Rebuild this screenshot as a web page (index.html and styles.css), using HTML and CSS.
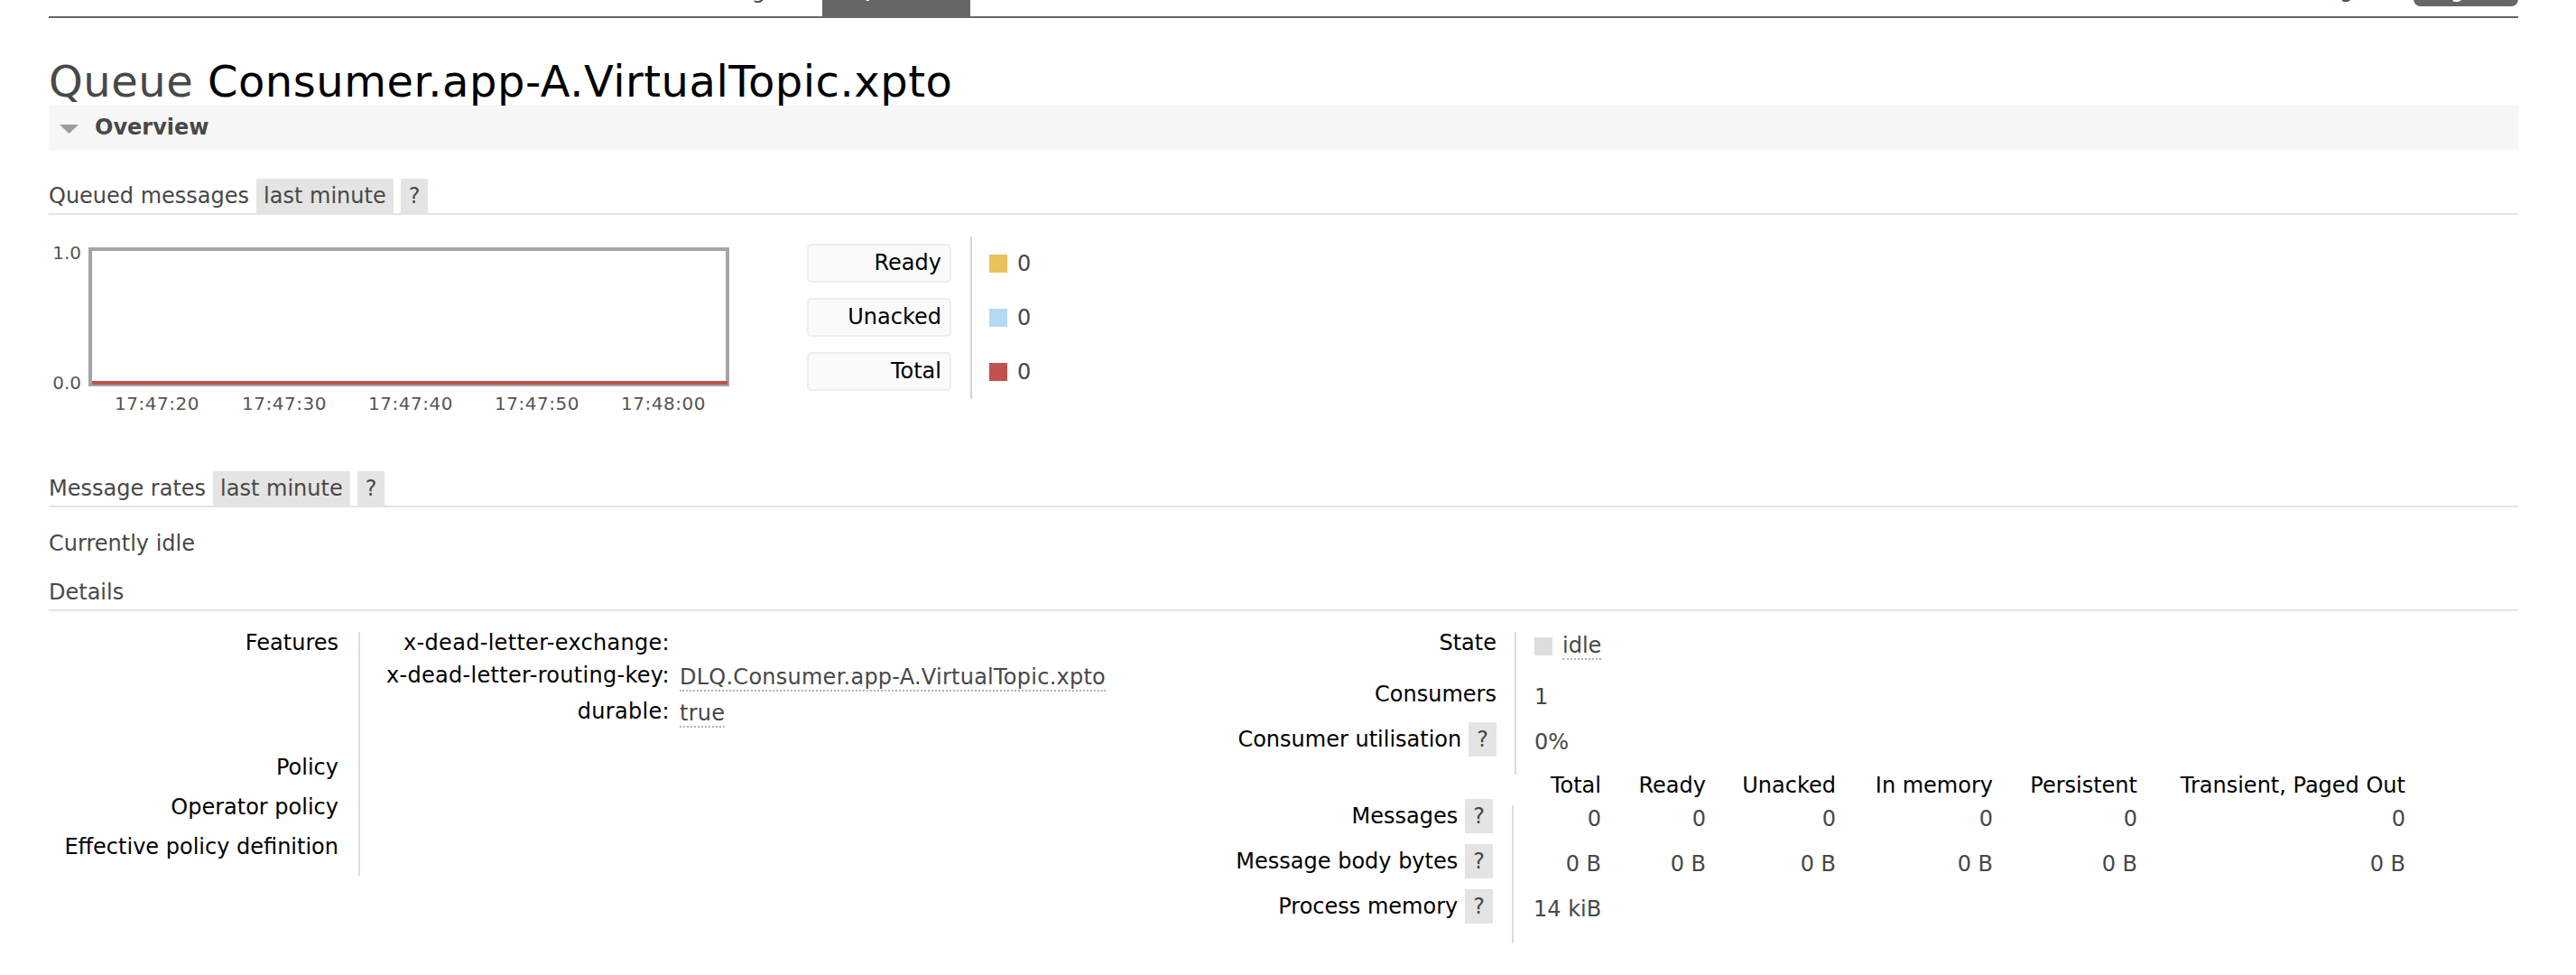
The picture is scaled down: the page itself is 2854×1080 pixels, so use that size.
FILE: index.html
```html
<!DOCTYPE html>
<html lang="en">
<head>
<meta charset="utf-8">
<title>RabbitMQ Management: Queue Consumer.app-A.VirtualTopic.xpto</title>
<link rel="stylesheet" href="styles.css">
</head>
<body>
<header class="header">
  <ul class="tabs">
    <li class="tab">Overview</li>
    <li class="tab">Connections</li>
    <li class="tab">Channels</li>
    <li class="tab">Exchanges</li>
    <li class="tab tab-active">Queues</li>
    <li class="tab">Admin</li>
  </ul>
  <div class="login">
    <span class="user">User guest</span>
    <span class="logout">Log out</span>
  </div>
</header>
<main class="main">
  <h1 class="title">Queue <b class="title-name">Consumer.app-A.VirtualTopic.xpto</b></h1>
  <section class="section">
    <h2 class="section-title"><svg class="tri" width="21" height="10" viewBox="0 0 21 10"><polygon points="0,0 21,0 10.5,10" fill="#9c9c9c"/></svg><span>Overview</span></h2>
    <div class="section-body">
      <h3 class="h3 h3-first"><span class="h3-text">Queued messages</span><span class="pill">last minute</span><span class="pill pill-q">?</span></h3>
      <div class="chart-row">
        <svg class="chart" width="770" height="200" viewBox="0 0 770 200">
          <rect x="46" y="14" width="706" height="150" fill="#fff" stroke="#a5a5a5" stroke-width="4"/>
          <rect x="48" y="160" width="704" height="4" fill="#c0514f"/>
          <text class="yl" x="36" y="25" text-anchor="end">1.0</text>
          <text class="yl" x="36" y="169" text-anchor="end">0.0</text>
          <text class="xl" x="120" y="192" text-anchor="middle">17:47:20</text>
          <text class="xl" x="261" y="192" text-anchor="middle">17:47:30</text>
          <text class="xl" x="401" y="192" text-anchor="middle">17:47:40</text>
          <text class="xl" x="541" y="192" text-anchor="middle">17:47:50</text>
          <text class="xl" x="681" y="192" text-anchor="middle">17:48:00</text>
        </svg>
        <div class="legend">
          <div class="legend-labels">
            <div class="lbox">Ready</div>
            <div class="lbox">Unacked</div>
            <div class="lbox">Total</div>
          </div>
          <div class="legend-values">
            <div class="lval"><i class="sw sw-ready"></i><span>0</span></div>
            <div class="lval"><i class="sw sw-unacked"></i><span>0</span></div>
            <div class="lval"><i class="sw sw-total"></i><span>0</span></div>
          </div>
        </div>
      </div>

      <h3 class="h3 h3-rates"><span class="h3-text">Message rates</span><span class="pill">last minute</span><span class="pill pill-q">?</span></h3>
      <p class="idle-msg">Currently idle</p>

      <h3 class="h3 h3-details"><span class="h3-text">Details</span></h3>
      <div class="details">
        <div class="facts-l">
          <div class="fl-label">Features</div>
          <div class="fl-value fl-features">
            <div class="features">
              <div class="fk">x-dead-letter-exchange:</div><div class="fv"></div>
              <div class="fk">x-dead-letter-routing-key:</div><div class="fv"><span class="abbr">DLQ.Consumer.app-A.VirtualTopic.xpto</span></div>
              <div class="fk">durable:</div><div class="fv"><span class="abbr">true</span></div>
            </div>
          </div>
          <div class="fl-label">Policy</div><div class="fl-value"></div>
          <div class="fl-label">Operator policy</div><div class="fl-value"></div>
          <div class="fl-label">Effective policy definition</div><div class="fl-value"></div>
        </div>

        <div class="facts-r">
          <div class="fr-top">
            <div class="fr-label">State</div>
            <div class="fr-value"><span class="state-dot"></span><span class="abbr">idle</span></div>
            <div class="fr-label">Consumers</div>
            <div class="fr-value">1</div>
            <div class="fr-label">Consumer utilisation<span class="pill pill-q pill-inline">?</span></div>
            <div class="fr-value">0%</div>
          </div>
          <div class="fr-bottom">
            <div></div>
            <div class="th">Total</div>
            <div class="th">Ready</div>
            <div class="th">Unacked</div>
            <div class="th">In memory</div>
            <div class="th">Persistent</div>
            <div class="th">Transient, Paged Out</div>

            <div class="fr-label fr-label-b">Messages<span class="pill pill-q pill-inline">?</span></div>
            <div class="num num-first">0</div>
            <div class="num">0</div>
            <div class="num">0</div>
            <div class="num">0</div>
            <div class="num">0</div>
            <div class="num">0</div>

            <div class="fr-label fr-label-b">Message body bytes<span class="pill pill-q pill-inline">?</span></div>
            <div class="num num-first">0 B</div>
            <div class="num">0 B</div>
            <div class="num">0 B</div>
            <div class="num">0 B</div>
            <div class="num">0 B</div>
            <div class="num">0 B</div>

            <div class="fr-label fr-label-b">Process memory<span class="pill pill-q pill-inline">?</span></div>
            <div class="num-span">14 kiB</div>
          </div>
        </div>
      </div>
    </div>
  </section>
</main>
</body>
</html>
```

FILE: styles.css
```css
* { box-sizing: border-box; }

html, body {
  margin: 0;
  padding: 0;
  background: #fff;
}

body {
  font-family: "DejaVu Sans", Verdana, "Noto Sans", sans-serif;
  font-size: 24px;
  line-height: 28px;
  color: #484848;
}

/* ---------- header (page scrolled, only its bottom is visible) ---------- */
.header {
  display: flex;
  align-items: flex-end;
  height: 62px;
  margin: -42px 64px 0 54px;
  border-bottom: 2px solid #666;
}

.tabs {
  display: flex;
  list-style: none;
  margin: 0 0 0 67px;
  padding: 0;
}

.tab {
  padding: 0 36px 16px;
  line-height: 24px;
  white-space: nowrap;
  color: #484848;
}

.tab-active {
  background: #666;
  color: #fff;
}

.login {
  display: flex;
  align-items: flex-end;
  gap: 15px;
  margin: 0 0 11px auto;
}

.user {
  line-height: 24px;
  padding-bottom: 6px;
  color: #484848;
  white-space: nowrap;
}

.logout {
  background: #666;
  color: #fff;
  line-height: 24px;
  padding: 0 13px 6px;
  border-radius: 8px;
  white-space: nowrap;
}

/* ---------- main ---------- */
.main {
  margin: 0 64px 0 54px;
}

.title {
  margin: 44px 0 0;
  font-size: 48px;
  line-height: 52px;
  font-weight: normal;
  letter-spacing: 0.5px;
  color: #484848;
  white-space: nowrap;
}

.title-name {
  font-weight: normal;
  color: #000;
}

.section-title {
  display: flex;
  margin: 0;
  height: 50px;
  padding-left: 12px;
  background: #f7f7f7;
  font-size: 24px;
  line-height: 50px;
  font-weight: bold;
  color: #484848;
}

.tri {
  flex: none;
  margin: 22px 18px 0 0;
}

/* ---------- h3 with pills ---------- */
.h3 {
  display: flex;
  align-items: flex-end;
  gap: 8px;
  margin: 0;
  font-size: 24px;
  font-weight: normal;
  line-height: 28px;
  color: #484848;
  border-bottom: 2px solid #e4e4e4;
}

.h3-first { margin-top: 32px; }
.h3-rates { margin-top: 60px; }
.h3-details { margin-top: 21px; }

.h3-text {
  padding: 5px 0;
  white-space: nowrap;
}

.pill {
  background: #e4e4e4;
  padding: 5px 8px;
  line-height: 28px;
  white-space: nowrap;
  color: #484848;
}

.pill-q {
  padding: 5px 9px;
}

.pill-inline {
  display: inline-block;
  margin: -7px 0 -7px 8px;
}

/* ---------- chart ---------- */
.chart-row {
  display: flex;
  height: 200px;
  margin-top: 24px;
}

.chart {
  flex: none;
  display: block;
}

.chart text {
  font-family: "DejaVu Sans", Verdana, sans-serif;
  font-size: 20px;
  fill: #555;
}

.chart .xl {
  letter-spacing: 0.5px;
}

.legend {
  display: flex;
  margin-left: 70px;
}

.legend-labels {
  display: flex;
  flex-direction: column;
  gap: 17px;
  padding-top: 8px;
  margin-right: 21px;
}

.lbox {
  width: 160px;
  height: 43px;
  border: 2px solid #eee;
  border-radius: 5px;
  background: #fafafa;
  color: #000;
  text-align: right;
  padding-right: 9px;
  line-height: 39px;
}

.legend-values {
  display: flex;
  flex-direction: column;
  gap: 17px;
  height: 180px;
  padding: 8px 0 0 19px;
  border-left: 2px solid #d4d4d4;
}

.lval {
  display: flex;
  align-items: center;
  gap: 11px;
  height: 43px;
}

.sw {
  display: block;
  width: 20px;
  height: 20px;
}

.sw-ready { background: #e8c35a; }
.sw-unacked { background: #b5d8f5; }
.sw-total { background: #c0514f; }

/* ---------- idle message ---------- */
.idle-msg {
  margin: 26px 0 0;
  line-height: 28px;
}

/* ---------- details ---------- */
.details {
  display: grid;
  grid-template-columns: 1296px auto;
  align-items: start;
  margin-top: 23px;
  line-height: 24px;
}

.facts-l {
  display: grid;
  grid-template-columns: 343px auto;
}

.fl-label {
  text-align: right;
  padding: 0 22px 20px 0;
  color: #000;
  white-space: nowrap;
}

.fl-value {
  border-left: 2px solid #dcdcdc;
  padding-bottom: 20px;
}

.fl-features {
  padding-bottom: 22px;
}

.features {
  display: grid;
  grid-template-columns: 343px auto;
  grid-template-rows: 36px 40px 40px;
}

.fk {
  text-align: right;
  color: #000;
  letter-spacing: 0.3px;
  white-space: nowrap;
}

.fv {
  padding: 2px 0 0 11px;
  white-space: nowrap;
  letter-spacing: 0.25px;
  color: #484848;
}

.abbr {
  border-bottom: 2px dotted #b4b4b4;
}

.fr-top {
  display: grid;
  grid-template-columns: 328px auto;
  grid-template-rows: 57px 50px 51px;
}

.fr-label {
  text-align: right;
  padding-right: 20px;
  color: #000;
  white-space: nowrap;
}

.fr-label-b {
  padding-right: 21px;
}

.fr-value {
  border-left: 2px solid #dcdcdc;
  padding: 3px 0 0 20px;
  color: #484848;
  white-space: nowrap;
}

.state-dot {
  display: inline-block;
  width: 20px;
  height: 20px;
  background: #dddddd;
  vertical-align: -3px;
  margin-right: 11px;
}

.fr-bottom {
  display: grid;
  grid-template-columns: 325px 99px 116px 144px 174px 160px 297px;
  grid-template-rows: 34px 50px 50px 53px;
}

.th {
  text-align: right;
  color: #000;
  white-space: nowrap;
}

.num {
  text-align: right;
  padding-top: 3px;
  color: #484848;
  white-space: nowrap;
}

.num-first {
  border-left: 2px solid #dcdcdc;
}

.num-span {
  grid-column: 2 / -1;
  border-left: 2px solid #dcdcdc;
  padding: 3px 0 0 22px;
  color: #484848;
}
```
